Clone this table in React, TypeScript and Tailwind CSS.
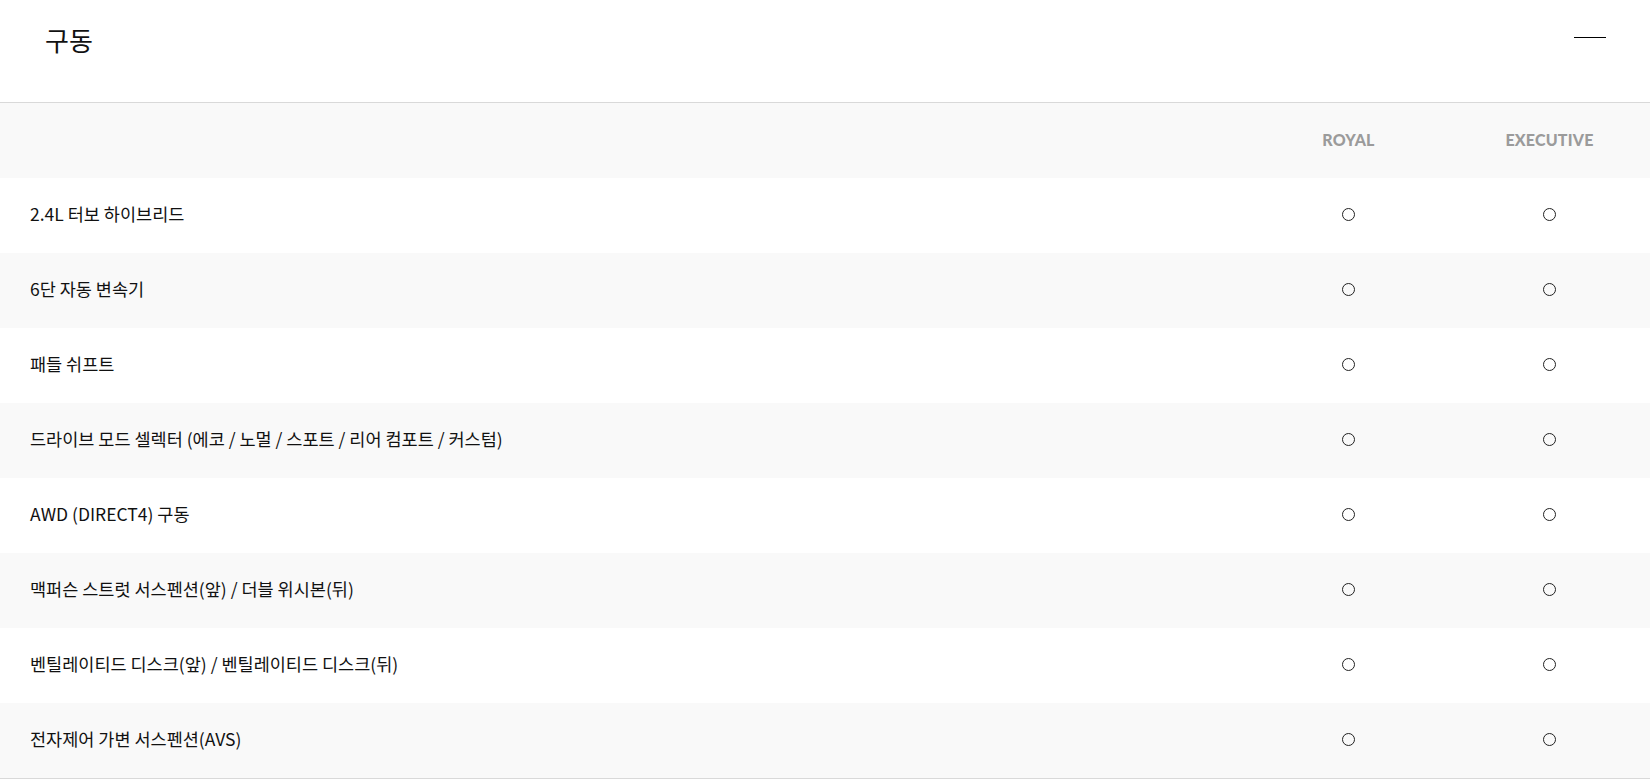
const FONT = "font-['Noto_Sans_CJK_KR','Noto_Sans',sans-serif]";

const TRIMS = ['ROYAL', 'EXECUTIVE'];

const ROWS = [
  '2.4L 터보 하이브리드',
  '6단 자동 변속기',
  '패들 쉬프트',
  '드라이브 모드 셀렉터 (에코 / 노멀 / 스포트 / 리어 컴포트 / 커스텀)',
  'AWD (DIRECT4) 구동',
  '맥퍼슨 스트럿 서스펜션(앞) / 더블 위시본(뒤)',
  '벤틸레이티드 디스크(앞) / 벤틸레이티드 디스크(뒤)',
  '전자제어 가변 서스펜션(AVS)',
];

function Mark() {
  return <span className="block w-[13px] h-[13px] rounded-full border border-[#222]" />;
}

export default function App() {
  return (
    <div className={`w-[1650px] min-h-[779px] bg-white text-[#111] ${FONT}`}>
      <div className="h-[102px] flex items-center justify-between pl-[45px] pr-[44px]">
        <h2 className="text-[26px] leading-none font-normal -mt-[22px]">구동</h2>
        <span className="block w-8 h-px bg-black -mt-[28px]" />
      </div>

      <div className="border-t border-b border-[#d9d9d9]">
        <div className="grid grid-cols-[1fr_201px_201px] h-[75px] bg-[#f9f9f9] items-center">
          <div />
          {TRIMS.map((t) => (
            <div
              key={t}
              className="text-center font-['Lato',sans-serif] font-black text-[16px] tracking-[0.2px] text-[#9b9b9b] -mt-[2px]"
            >
              {t}
            </div>
          ))}
        </div>
        {ROWS.map((label, i) => (
          <div
            key={label}
            className={`grid grid-cols-[1fr_201px_201px] h-[75px] items-center ${
              i % 2 === 1 ? 'bg-[#f9f9f9]' : 'bg-white'
            }`}
          >
            <div className="pl-[30px] text-[17.5px] -mt-[2px]">{label}</div>
            {TRIMS.map((t) => (
              <div key={t} className="flex justify-center -mt-[2px]">
                <Mark />
              </div>
            ))}
          </div>
        ))}
      </div>
    </div>
  );
}
